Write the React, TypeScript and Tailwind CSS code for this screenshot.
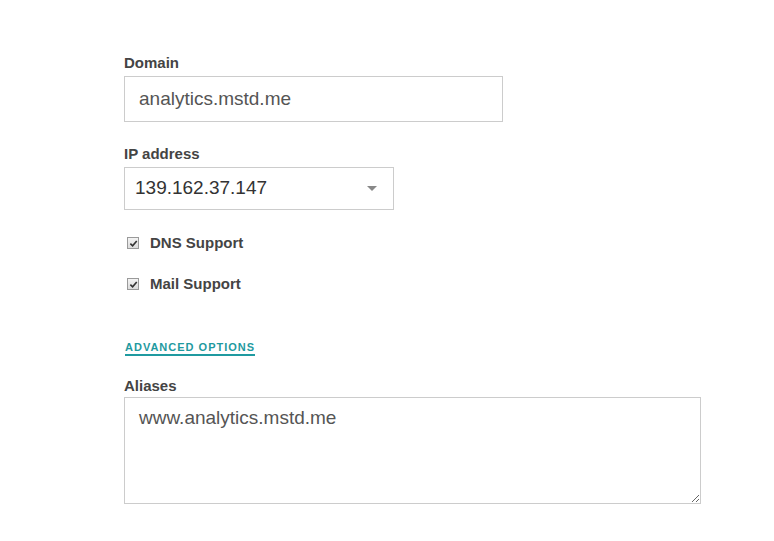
const font = { fontFamily: '"Liberation Sans", Arial, sans-serif' };

const Label = ({ children }: { children: React.ReactNode }) => (
  <div className="text-[15px] font-bold leading-5 text-[#444]">{children}</div>
);

const Check = ({ label }: { label: string }) => (
  <label className="flex h-5 items-center">
    <span className="ml-[3px] flex h-[12px] w-[12px] items-center justify-center border border-[#9a9a9a] bg-gradient-to-b from-[#f4f4f4] to-[#dcdcdc]">
      <svg viewBox="0 0 10 10" className="h-[9px] w-[9px]">
        <path d="M1.5 5.2 L4 7.6 L8.6 2.2" fill="none" stroke="#333" strokeWidth="1.8" />
      </svg>
    </span>
    <span className="ml-[11px] text-[15px] font-bold text-[#444]">{label}</span>
  </label>
);

export default function App() {
  return (
    <div className="min-h-screen bg-white pl-[124px] pt-[53px]" style={font}>
      <Label>Domain</Label>
      <div className="mt-[3px] flex h-[46px] w-[379px] items-center border border-[#cccccc] pl-[14px] text-[19px] text-[#555]">
        analytics.mstd.me
      </div>

      <div className="mt-[22px]">
        <Label>IP address</Label>
      </div>
      <div className="mt-[3px] flex h-[43px] w-[270px] items-center justify-between border border-[#cccccc] pl-[10px] pr-[16px] text-[19px] text-[#333]">
        <span>139.162.37.147</span>
        <svg viewBox="0 0 10 5" className="h-[5px] w-[10px]">
          <path d="M0 0 L10 0 L5 5 Z" fill="#888" />
        </svg>
      </div>

      <div className="mt-[23px] flex flex-col gap-[21px]">
        <Check label="DNS Support" />
        <Check label="Mail Support" />
      </div>

      <div className="mt-[40px] pl-px">
        <a className="border-b-2 border-[#1f9aa0] pb-[1px] text-[11px] font-bold tracking-[1px] text-[#1f9aa0]">
          ADVANCED OPTIONS
        </a>
      </div>

      <div className="mt-[18px]">
        <Label>Aliases</Label>
      </div>
      <textarea
        className="mt-[1px] block h-[107px] w-[577px] border border-[#cccccc] px-[14px] py-[6px] text-[19px] text-[#555] outline-none"
        style={font}
        defaultValue="www.analytics.mstd.me"
      />
    </div>
  );
}
